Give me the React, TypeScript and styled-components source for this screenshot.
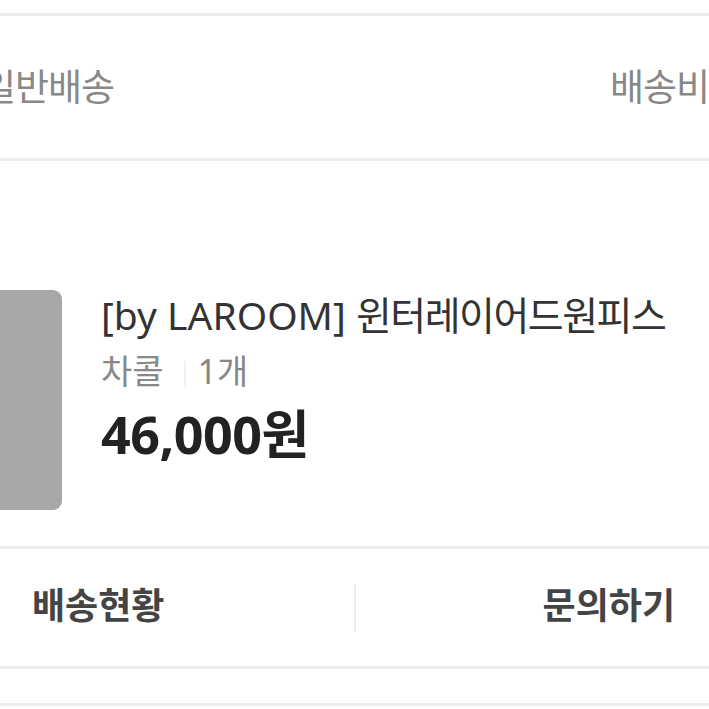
import React from 'react'
import styled, { createGlobalStyle } from 'styled-components'

const GlobalStyle = createGlobalStyle`
  html, body {
    margin: 0;
    padding: 0;
    background: #fff;
    overflow: hidden;
  }
  body {
    font-family: "Noto Sans", "Noto Sans CJK KR", sans-serif;
  }
`

const Page = styled.div`
  width: 100vw;
  height: 100vh;
  overflow: hidden;
  padding-top: 13px;
  box-sizing: border-box;
`

const Line = styled.div`
  height: 3px;
  background: #eeeeee;
`

const ShipRow = styled.div`
  height: 142px;
  display: flex;
  align-items: center;
  justify-content: space-between;
  margin: 0 0 0 -18px;
  padding-bottom: 4px;
  box-sizing: border-box;
`

const ShipText = styled.span`
  font-family: "Noto Sans CJK KR", sans-serif;
  font-size: 37px;
  color: #888;
  letter-spacing: -1px;
`

const ProductArea = styled.div`
  padding: 129px 0 36px;
`

const Product = styled.div`
  display: flex;
  align-items: flex-start;
`

const Thumb = styled.div`
  width: 220px;
  height: 220px;
  margin-left: -158px;
  flex-shrink: 0;
  border-radius: 9px;
  background: #a7a7a7;
`

const Info = styled.div`
  margin-left: 39px;
  display: flex;
  flex-direction: column;
`

const Title = styled.div`
  font-size: 39px;
  line-height: 46px;
  color: #333;
  white-space: nowrap;
`

const Name = styled.span`
  font-family: "Noto Sans CJK KR", sans-serif;
  letter-spacing: -1.5px;
`

const Option = styled.div`
  display: flex;
  align-items: center;
  margin-top: 13px;
  font-size: 34px;
  line-height: 40px;
  color: #888;
`

const OptionBar = styled.span`
  width: 2px;
  height: 26px;
  margin: 6px 12px 0 20px;
  background: #f0f0f0;
`

const Price = styled.div`
  margin-top: 13px;
  font-size: 52px;
  line-height: 60px;
  font-weight: 700;
  color: #222;
  letter-spacing: -0.5px;
`

const ButtonRow = styled.div`
  height: 117px;
  display: grid;
  grid-template-columns: 1fr 2px 1fr;
  align-items: center;
`

const ActionButton = styled.button<{ $align: 'left' | 'right' }>`
  border: none;
  background: none;
  padding: ${p => (p.$align === 'left' ? '0 0 10px 32px' : '0 34px 10px 0')};
  text-align: ${p => p.$align};
  font-family: "Noto Sans CJK KR", sans-serif;
  font-size: 36px;
  font-weight: 700;
  color: #444;
`

const ButtonDivider = styled.div`
  height: 48px;
  background: #eeeeee;
`

const Spacer = styled.div`
  height: 34px;
`

export default function App() {
  return (
    <Page>
      <GlobalStyle />
      <Line />
      <ShipRow>
        <ShipText>일반배송</ShipText>
        <ShipText>배송비</ShipText>
      </ShipRow>
      <Line />
      <ProductArea>
        <Product>
          <Thumb />
          <Info>
            <Title>
              [by LAROOM] <Name>윈터레이어드원피스</Name>
            </Title>
            <Option>
              <span>차콜</span>
              <OptionBar />
              <span>1개</span>
            </Option>
            <Price>46,000원</Price>
          </Info>
        </Product>
      </ProductArea>
      <Line />
      <ButtonRow>
        <ActionButton $align="left">배송현황</ActionButton>
        <ButtonDivider />
        <ActionButton $align="right">문의하기</ActionButton>
      </ButtonRow>
      <Line />
      <Spacer />
      <Line />
    </Page>
  )
}
